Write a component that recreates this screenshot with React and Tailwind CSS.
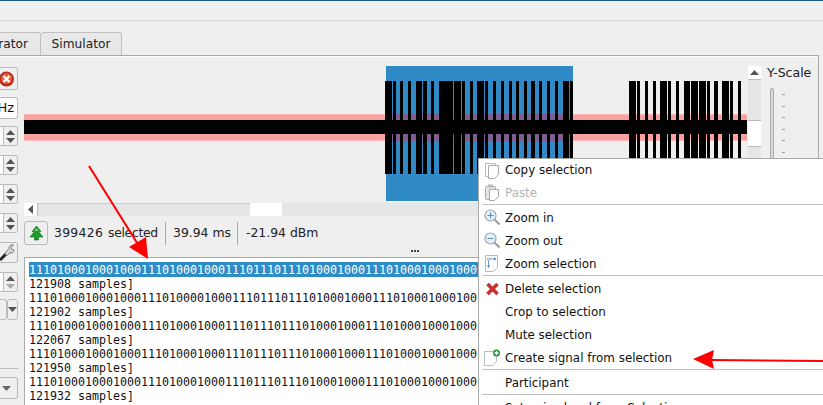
const sel = [[385,392],[393,396],[400,403],[408,411],[416,422],[423,427],[431,434],[439,446],[446,453],[454,461],[462,465],[470,473],[477,484],[485,488],[493,496],[501,504],[509,512],[516,519],[524,527],[531,535],[539,542],[547,550],[555,558],[563,569],[570,573]];
const rest = [[629,636],[637,640],[645,648],[653,656],[660,667],[668,671],[676,679],[684,690],[691,698],[699,706],[707,710],[714,718],[722,729],[730,733],[738,741]];

function Wave() {
  return (
    <svg width="723" height="135" viewBox="24 66 723 135" className="block shrink-0">
      <rect x="24" y="114" width="723" height="27" fill="#f9a0a0" />
      <rect x="24" y="114" width="723" height="1" fill="#fbb9b9" />
      <rect x="24" y="140" width="723" height="1" fill="#fbb9b9" />
      <rect x="386" y="66" width="187" height="135" fill="#2f8ac6" />
      <rect x="386" y="114" width="187" height="27" fill="#7c5f8e" />
      <rect x="24" y="120" width="723" height="14" fill="#000" />
      {[...sel, ...rest].map(([a, b]) => (
        <rect key={a} x={a} y="81" width={b - a} height="93" fill="#000" />
      ))}
    </svg>
  );
}

function Tri({ down, c = "#555" }) {
  return (
    <svg width="9" height="5" viewBox="0 0 9 5" className="block">
      <path d={down ? "M0 0H9L4.5 5Z" : "M4.5 0L9 5H0Z"} fill={c} />
    </svg>
  );
}

function Spin({ mt, dim }) {
  return (
    <div className={`flex h-[20px] ${mt}`}>
      <div className="w-[4px] h-full bg-white border-r border-y border-[#bbb]" />
      <div className="w-[14px] h-full flex flex-col items-center justify-center gap-[3px] rounded-r-[3px] border border-l-0 border-[#bbb] bg-[#efefef]">
        <Tri />
        <Tri down c={dim ? "#aaa" : "#555"} />
      </div>
    </div>
  );
}

function LeftCol() {
  return (
    <div className="w-[18px] shrink-0 flex flex-col">
      <div className="mt-[10px] h-[23px] rounded-r-[3px] border border-l-0 border-[#bbb] flex items-center">
        <svg width="15" height="16" viewBox="0 0 15 16" className="block">
          <circle cx="6.5" cy="8" r="7.5" fill="#b9281a" />
          <circle cx="6.5" cy="7.5" r="5.5" fill="#e2603a" />
          <path d="M3.5 5L9.5 11M9.5 5L3.5 11" stroke="#fff" strokeWidth="2.4" />
        </svg>
      </div>
      <div className="mt-[7px] h-[22px] bg-white rounded-r-[3px] border border-l-0 border-[#bbb] flex items-center justify-end pr-[3px] overflow-hidden text-[13px] text-[#111]">
        Hz
      </div>
      <Spin mt="mt-[7px]" />
      <Spin mt="mt-[9px]" />
      <Spin mt="mt-[9px]" />
      <Spin mt="mt-[9px]" />
      <div className="mt-[9px] h-[21px] rounded-r-[3px] border border-l-0 border-[#bbb] flex items-center">
        <svg width="15" height="19" viewBox="0 0 15 19" className="block">
          <path d="M0 17L6 11" stroke="#222" strokeWidth="3" />
          <path d="M5 10L9 5.5C9 3 11 1 13.5 2L11 4.5L12 6.5L14 7C14 9.5 11.5 10.5 9.5 10L6.5 13Z" fill="#d8d8d8" stroke="#777" strokeWidth="1" />
        </svg>
      </div>
      <Spin mt="mt-[9px]" dim />
      <div className="flex h-[21px] mt-[7px]">
        <div className="w-[7px] h-full bg-[#efefef] rounded-r-[3px] border-r border-y border-[#bbb]" />
        <div className="w-[11px] h-full flex items-center justify-center rounded-[3px] border border-[#bbb] bg-[#efefef]">
          <Tri down />
        </div>
      </div>
      <div className="mt-[48px] h-px bg-[#bbb]" />
      <div className="mt-[8px] h-[22px] rounded-r-[3px] border border-l-0 border-[#bbb] flex items-center pl-[2px] justify-start">
        <Tri down c="#666" />
      </div>
    </div>
  );
}

function Doc({ x, y, w = 10, h = 13, fill = "#fff", stroke = "#b0b0b0" }) {
  return (
    <path
      d={`M${x} ${y}h${w}v${h - 4}l-4 4h-${w - 4}z`}
      fill={fill}
      stroke={stroke}
      strokeWidth="1"
    />
  );
}

function Ico({ children }) {
  return (
    <svg width="17" height="17" viewBox="0 0 17 17" className="block">
      {children}
    </svg>
  );
}

function Mag({ children }) {
  return (
    <Ico>
      <path d="M10 10L15.5 15.5" stroke="#9a9a9a" strokeWidth="2" />
      <circle cx="6.5" cy="6.5" r="5.5" fill="#e4eff8" stroke="#9aa8b4" strokeWidth="1.2" />
      {children}
    </Ico>
  );
}

const icons = {
  copy: (
    <Ico>
      <Doc x={1.5} y={1.5} stroke="#bbb" />
      <Doc x={4.5} y={3.5} stroke="#aaa" />
    </Ico>
  ),
  paste: (
    <Ico>
      <rect x="1.5" y="2.5" width="10" height="13" rx="1" fill="#e4e4e4" stroke="#aaa" />
      <rect x="4" y="0.5" width="5" height="3" fill="#bbb" />
      <Doc x={5.5} y={5.5} w={9} h={11} stroke="#aaa" />
    </Ico>
  ),
  zin: (
    <Mag>
      <path d="M3.5 6.5H9.5M6.5 3.5V9.5" stroke="#5a8bb6" strokeWidth="1" />
    </Mag>
  ),
  zout: (
    <Mag>
      <path d="M3.5 6.5H9.5" stroke="#5a8bb6" strokeWidth="1" />
    </Mag>
  ),
  zsel: (
    <Ico>
      <Doc x={1.5} y={0.5} w={12} h={16} stroke="#bbb" />
      <path d="M4.5 4.5V11M4.5 4H10" stroke="#5a9fd8" strokeWidth="1" />
      <path d="M3 10.5H6L4.5 13ZM10 2.5V5.5L12.5 4Z" fill="#2f7fc6" />
      <circle cx="4.5" cy="4" r="1.2" fill="#fff" stroke="#888" strokeWidth="0.7" />
    </Ico>
  ),
  del: (
    <Ico>
      <path d="M3.5 4L13.5 14M13.5 4L3.5 14" stroke="#c9302c" strokeWidth="3.6" />
    </Ico>
  ),
  create: (
    <Ico>
      <Doc x={0.5} y={2.5} w={12} h={14} stroke="#bbb" />
      <circle cx="12.5" cy="4" r="3.5" fill="#1e9e2c" />
      <path d="M10.5 4H14.5M12.5 2V6" stroke="#fff" strokeWidth="1.4" />
    </Ico>
  ),
};

function Item({ icon, children, dim, h = "h-[23px]" }) {
  return (
    <div className={`${h} flex items-center shrink-0`}>
      <div className="w-[26px] pl-[5px] shrink-0">{icon}</div>
      <span className={dim ? "text-[#b4b4b4] pt-[2px]" : "text-[#111] pt-[2px]"}>{children}</span>
    </div>
  );
}

function Sep() {
  return <div className="h-px mb-px ml-[3px] bg-[#c0c0c0] shrink-0" />;
}

function Menu() {
  return (
    <div className="absolute left-[478px] top-[158px] w-[345px] h-[247px] bg-white border-l border-t border-[#aaa] flex flex-col overflow-hidden text-[11.9px]">
      <Item icon={icons.copy} h="h-[22px]">Copy selection</Item>
      <Item icon={icons.paste} dim>Paste</Item>
      <Sep />
      <Item icon={icons.zin}>Zoom in</Item>
      <Item icon={icons.zout}>Zoom out</Item>
      <Item icon={icons.zsel}>Zoom selection</Item>
      <Sep />
      <Item icon={icons.del}>Delete selection</Item>
      <Item>Crop to selection</Item>
      <Item>Mute selection</Item>
      <Item icon={icons.create}>Create signal from selection</Item>
      <Sep />
      <Item>Participant</Item>
      <Sep />
      <Item>Set noise level from Selection</Item>
    </div>
  );
}

const rows = [
  ["1110100010001000111010001000111011101110100010001110100010001000", "121908 samples]"],
  ["1110100010001000111010000100011101110111010001000111010001000100", "121902 samples]"],
  ["1110100010001000111010001000111011101110100010001110100010001000", "122067 samples]"],
  ["1110100010001000111010001000111011101110100010001110100010001000", "121950 samples]"],
  ["1110100010001000111010001000111011101110100010001110100010001000", "121932 samples]"],
];

function Output() {
  return (
    <div className="w-[460px] h-[148px] bg-white border-l border-t border-[#aaa] pl-[4px] pt-[4px] overflow-hidden font-['DejaVu_Sans_Mono',monospace] text-[11.63px] leading-[14px] text-[#111] whitespace-nowrap">
      {rows.map(([a, b], i) => (
        <div key={i}>
          <div className={i === 0 ? "bg-[#308cc6] text-white pt-px" : ""}>{a}</div>
          <div>{b}</div>
        </div>
      ))}
    </div>
  );
}

function Status() {
  return (
    <div className="mt-[5px] h-[24px] flex items-center text-[12.4px] text-[#222]">
      <div className="w-[24px] h-[24px] rounded-[3px] border border-[#bbb] flex items-center justify-center shrink-0">
        <svg width="15" height="15" viewBox="0 0 15 15" className="block">
          <path d="M7.5 0L12 5.5H9.5L14 11H9.5V14H5.5V11H1L5.5 5.5H3Z" fill="#1f9a2c" stroke="#0f6a18" strokeWidth="0.6" />
          <path d="M7.5 2L10 5H5Z" fill="#6fd07a" />
        </svg>
      </div>
      <span className="ml-[6px] w-[49px] pt-px tracking-[0.3px]">399426</span>
      <span className="ml-[5px] w-[57px] pt-px tracking-[-0.3px]">selected</span>
      <div className="w-px h-[23px] bg-[#aaa]" />
      <span className="ml-[7px] w-[64px] pt-px">39.94 ms</span>
      <div className="w-px h-[23px] bg-[#aaa]" />
      <span className="ml-[8px] pt-px">-21.94 dBm</span>
    </div>
  );
}

function HScroll() {
  return (
    <div className="mt-[2px] h-[13px] w-[460px] flex bg-[#e6e6e6]">
      <div className="w-[14px] bg-white flex items-center justify-center border-r border-[#bbb]">
        <svg width="5" height="9" viewBox="0 0 5 9" className="block"><path d="M5 0V9L0 4.5Z" fill="#555" /></svg>
      </div>
      <div className="w-[212px] border-t border-[#ccc]" />
      <div className="w-[32px] bg-white" />
    </div>
  );
}

function VScroll() {
  return (
    <div className="ml-px w-[13px] h-[135px] shrink-0 flex flex-col bg-[#e6e6e6]">
      <div className="h-[14px] bg-white flex items-center justify-center border-b border-[#bbb]">
        <Tri />
      </div>
      <div className="h-[40px]" />
      <div className="h-[27px] bg-white border-y border-[#bbb]" />
    </div>
  );
}

function YScale() {
  return (
    <div className="ml-[6px] shrink-0 w-[50px] text-[12.5px] leading-[14px] text-[#222]">
      Y-Scale
      <div className="relative mt-[8px] h-[80px]">
        <div className="ml-[3px] w-[4px] h-full bg-[#d8d8d8] border border-[#aaa] rounded-t-[2px]" />
      </div>
    </div>
  );
}

function Ticks() {
  return (
    <div className="absolute left-[782px] top-[94px] flex flex-col gap-[10.5px]">
      {[0, 1, 2, 3, 4, 5].map((i) => (
        <div key={i} className="w-[3px] h-px bg-[#999]" />
      ))}
    </div>
  );
}

function Arrows() {
  return (
    <svg width="823" height="405" viewBox="0 0 823 405" className="absolute left-0 top-0 block pointer-events-none">
      <path d="M89 166L139 246" stroke="#ff0000" strokeWidth="2" />
      <path d="M148 259L129 247L146 237Z" fill="#ff0000" />
      <path d="M712 360L823 361" stroke="#ff0000" strokeWidth="2" />
      <path d="M693 359L714 350L712 360L714 369Z" fill="#ff0000" />
    </svg>
  );
}

export default function App() {
  return (
    <div className="relative w-[823px] h-[405px] overflow-hidden bg-[#efefef] font-['DejaVu_Sans',sans-serif] text-[13px] flex flex-col">
      <div className="h-px bg-[#1f5a85] shrink-0" />
      <div className="h-[20px] border-b border-[#d4d4d4] shrink-0" />
      <div className="h-[34px] pt-[11px] flex items-stretch shrink-0 text-[#222] text-[12.2px]">
        <div className="w-[41px] bg-[#e8e8e8] border border-l-0 border-b-0 border-[#c0c0c0] rounded-tr-[3px] flex items-center justify-end pr-[12px]">rator</div>
        <div className="w-[81px] bg-[#e8e8e8] border border-l-0 border-b-0 border-[#c0c0c0] rounded-t-[3px] flex items-center justify-center">Simulator</div>
      </div>
      <div className="flex-1 min-h-0 w-[819px] border-t border-r border-[#aaa]">
        <div className="h-full border-t border-white flex">
          <LeftCol />
          <div className="ml-[6px] flex-1 min-w-0 flex flex-col">
            <div className="mt-[9px] flex">
              <Wave />
              <VScroll />
              <YScale />
            </div>
            <HScroll />
            <Status />
            <div className="h-[12px] w-[460px] flex items-center justify-center pl-[322px]">
              <svg width="8" height="2" viewBox="0 0 8 2" className="block">
                <path d="M0 0H2V2H0ZM3 0H5V2H3ZM6 0H8V2H6Z" fill="#444" />
              </svg>
            </div>
            <Output />
          </div>
        </div>
      </div>
      <Ticks />
      <Menu />
      <Arrows />
    </div>
  );
}
